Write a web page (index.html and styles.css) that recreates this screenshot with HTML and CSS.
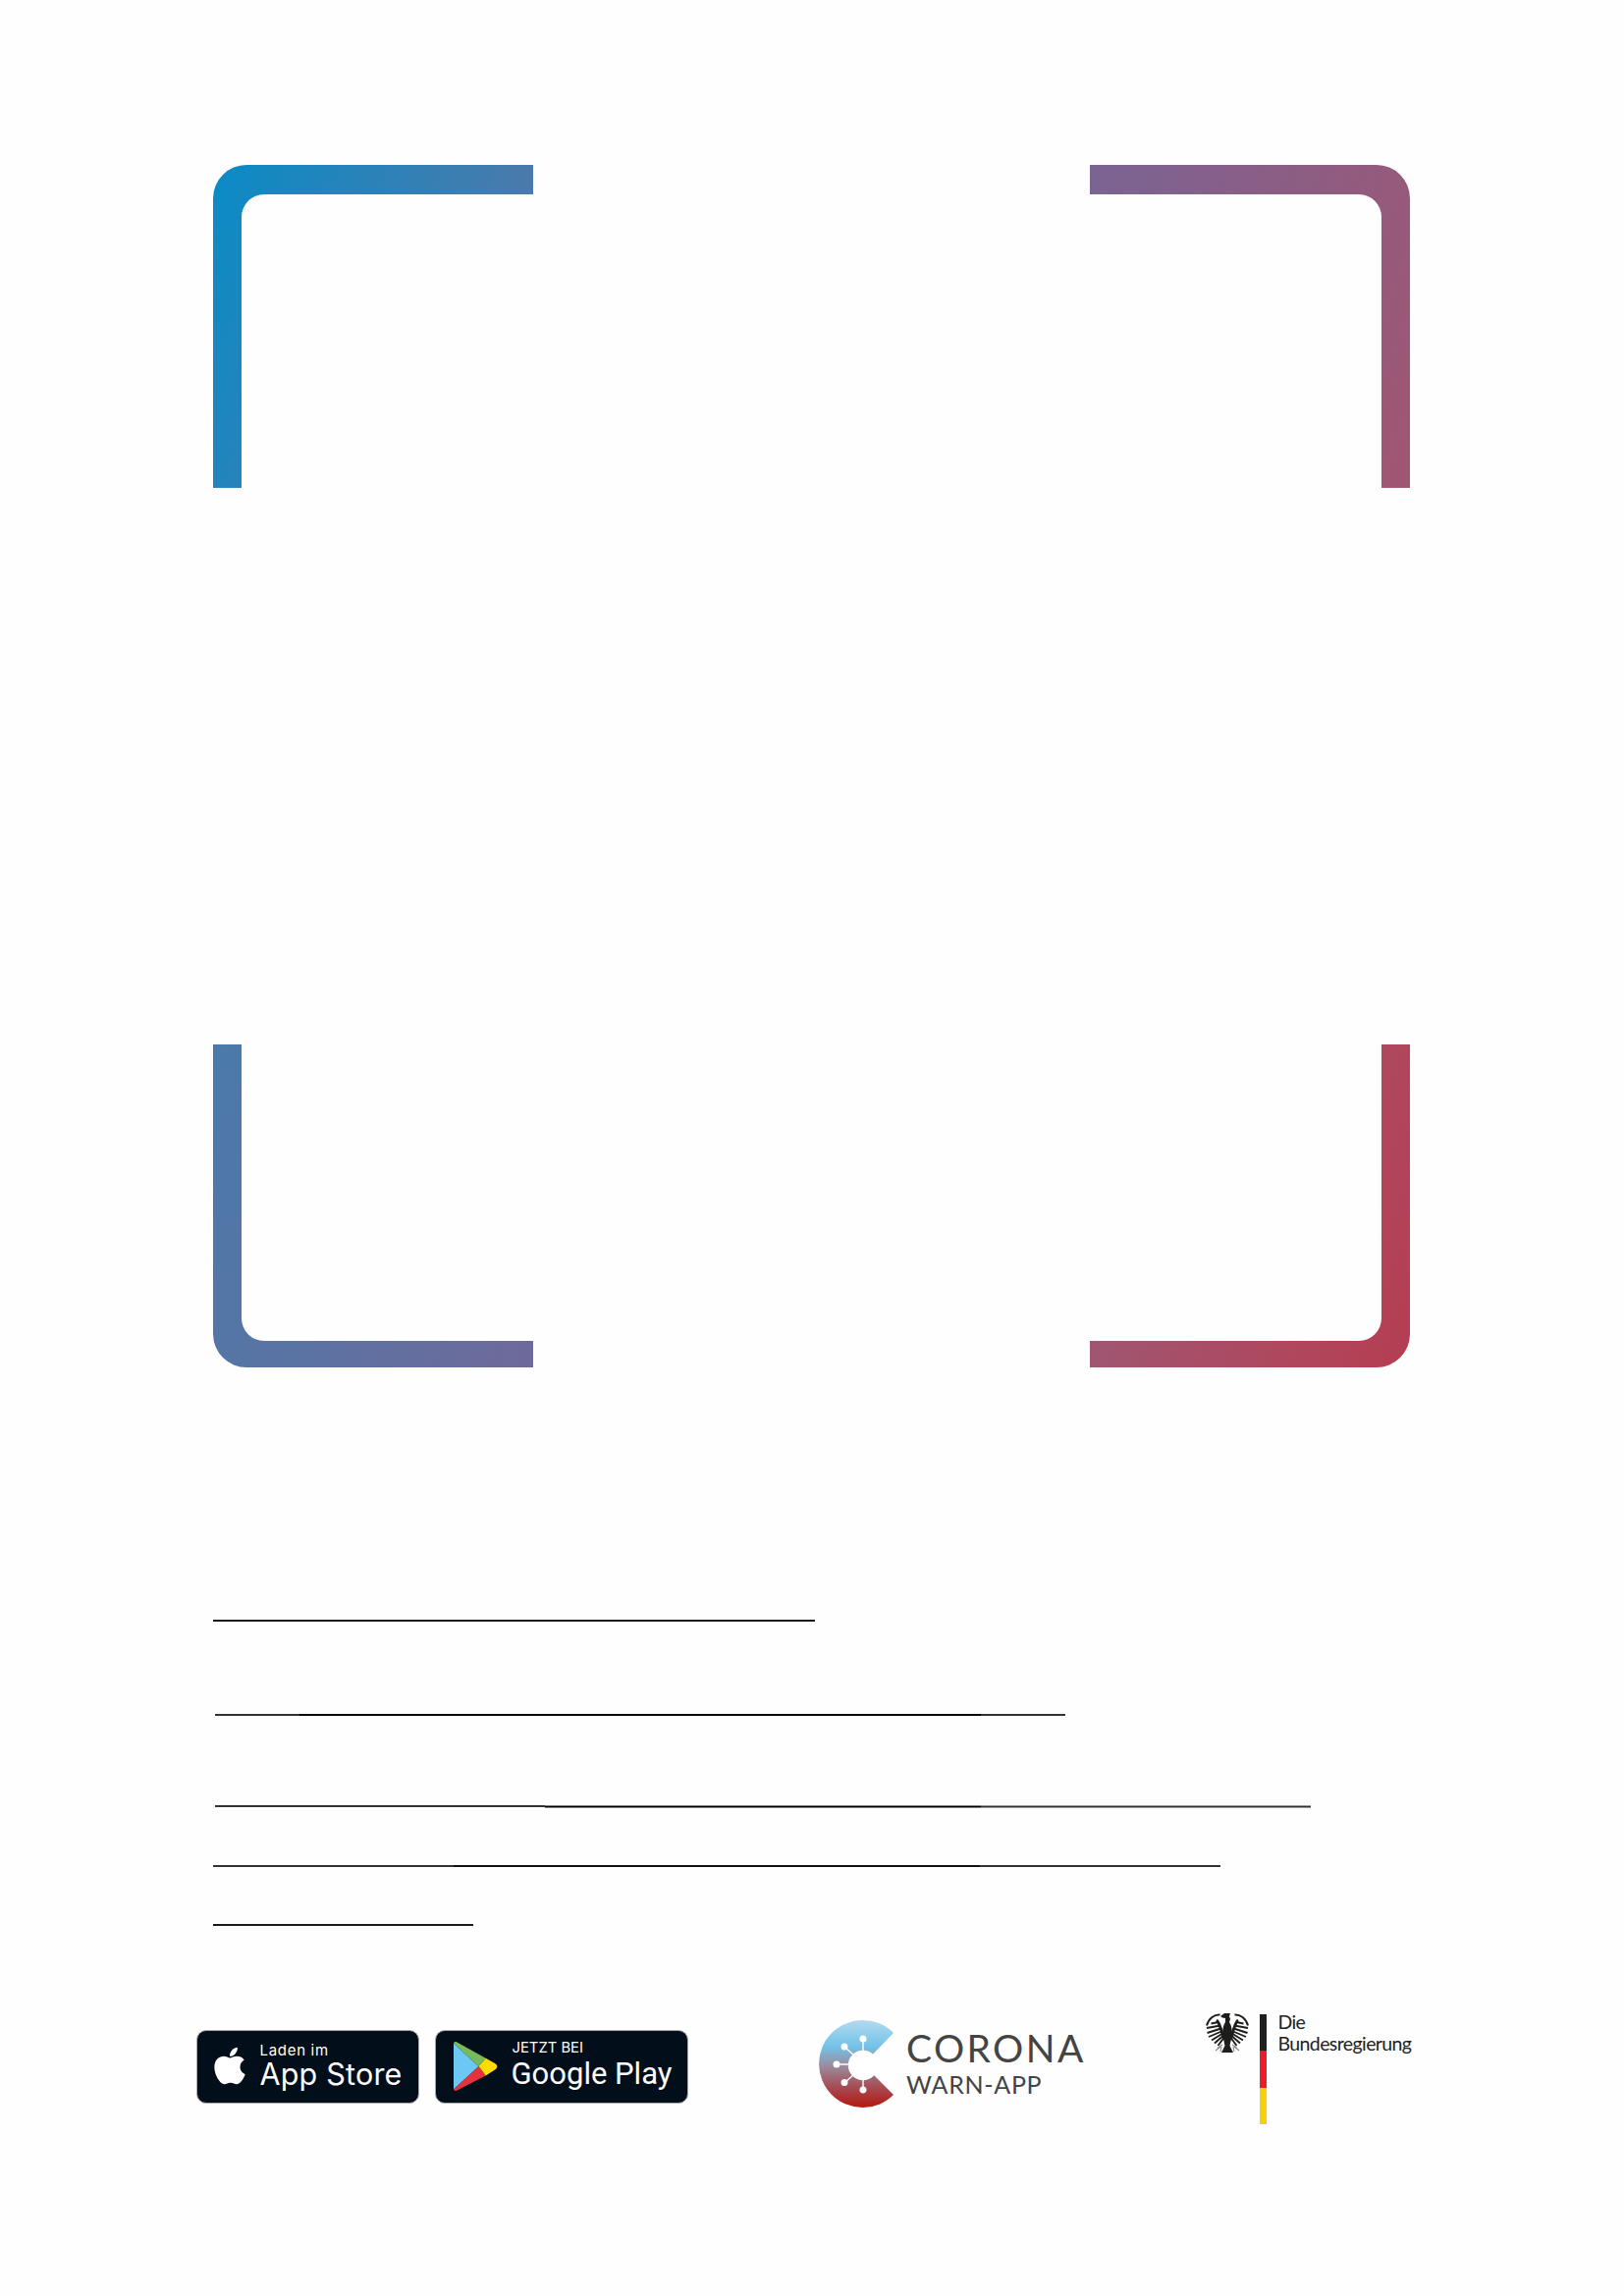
FILE: index.html
```html
<!DOCTYPE html>
<html lang="de">
<head>
<meta charset="utf-8">
<title>Corona-Warn-App</title>
<link rel="stylesheet" href="styles.css">
</head>
<body>
<main class="page">
  <svg class="frame" width="1219" height="1225" viewBox="0 0 1219 1225" aria-hidden="true">
    <defs>
      <linearGradient id="frameGrad" gradientUnits="userSpaceOnUse" x1="0" y1="0" x2="1470" y2="534.5">
        <stop offset="0" stop-color="#0a8bc6"/>
        <stop offset="0.196" stop-color="#4a7aab"/>
        <stop offset="0.46" stop-color="#6e6a9a"/>
        <stop offset="0.537" stop-color="#7a6494"/>
        <stop offset="0.8" stop-color="#a05672"/>
        <stop offset="0.93" stop-color="#b0465c"/>
        <stop offset="1" stop-color="#b53d52"/>
      </linearGradient>
    </defs>
    <g fill="url(#frameGrad)">
      <path d="M0 329V34A34 34 0 0 1 34 0H326V30H52A23 23 0 0 0 29 53V329Z"/>
      <path d="M893 0H1185A34 34 0 0 1 1219 34V329H1190V53A23 23 0 0 0 1167 30H893Z"/>
      <path d="M0 896H29V1175A23 23 0 0 0 52 1198H326V1225H34A34 34 0 0 1 0 1191Z"/>
      <path d="M1190 896H1219V1191A34 34 0 0 1 1185 1225H893V1198H1167A23 23 0 0 0 1190 1175Z"/>
    </g>
  </svg>

  <section class="rules">
    <div class="rule rule-a"></div>
    <div class="rule rule-b"><i class="seg thin seg-b1"></i><i class="seg thick seg-b2"></i><i class="seg thin seg-b3"></i></div>
    <div class="rule rule-c"><i class="seg thin seg-c1"></i><i class="seg thick low seg-c2"></i><i class="seg thin low seg-c3"></i></div>
    <div class="rule rule-d"><i class="seg thin seg-d1"></i><i class="seg mid seg-d2"></i><i class="seg thin seg-d3"></i></div>
    <div class="rule rule-e"></div>
  </section>

  <footer class="footer">
    <div class="badge badge-apple">
      <svg class="apple" width="32" height="43" viewBox="0 0 384 512" aria-hidden="true"><path fill="#fff" d="M318.7 268.7c-.2-36.7 16.4-64.4 50-84.8-18.8-26.9-47.2-41.7-84.7-44.6-35.5-2.8-74.3 20.7-88.5 20.7-15 0-49.4-19.7-76.4-19.7C63.3 141.2 4 184.8 4 273.5q0 39.3 14.4 81.2c12.8 36.7 59 126.7 107.2 125.2 25.2-.6 43-17.9 75.8-17.9 31.8 0 48.3 17.9 76.4 17.9 48.6-.7 90.4-82.5 102.6-119.3-65.2-30.7-61.7-90-61.7-91.9zm-56.6-164.2c27.3-32.4 24.8-61.9 24-72.5-24.1 1.4-52 16.4-67.9 34.9-17.5 19.8-27.8 44.3-25.5 71.9 26.1 2 49.9-11.4 69.4-34.3z"/></svg>
      <div class="badge-text">
        <span class="apple-small">Laden im</span>
        <span class="apple-big">App Store</span>
      </div>
    </div>
    <div class="badge badge-google">
      <svg class="play" width="45" height="50" viewBox="0 0 44 48" preserveAspectRatio="none" aria-hidden="true">
        <path fill="#6cc7f4" d="M0 1.5 25 24 0 46.5Z"/>
        <path fill="#78bb5c" d="M0 1.5C.4 0 1.6-.4 3 .3L32 16 25 24Z"/>
        <path fill="#e5323f" d="M0 46.5C.4 48 1.6 48.4 3 47.7L32 33 25 24Z"/>
        <path fill="#ffdb00" d="M32 16 41.5 21.4C44 23 44 25.5 41.5 27L32 33 25 24Z"/>
      </svg>
      <div class="badge-text">
        <span class="google-small">JETZT BEI</span>
        <span class="google-big">Google Play</span>
      </div>
    </div>
    <div class="cwa">
      <svg class="cwa-mark" width="90" height="90" viewBox="0 0 90 90" aria-hidden="true">
        <defs>
          <linearGradient id="cwaGrad" x1="0" y1="0" x2="0" y2="1">
            <stop offset="0" stop-color="#b4d9ef"/>
            <stop offset="0.3" stop-color="#73c3e8"/>
            <stop offset="0.52" stop-color="#9a8c9f"/>
            <stop offset="0.8" stop-color="#a8444a"/>
            <stop offset="1" stop-color="#b5170c"/>
          </linearGradient>
        </defs>
        <path fill="url(#cwaGrad)" d="M76 13A44.5 44.5 0 1 0 76 76L45 45Z"/>
        <g fill="#fff" stroke="#fff" stroke-width="1.4">
          <circle cx="45" cy="46" r="14.5"/>
          <path d="M45 19V35M26 27 36 36M18 45H31M26 64 36 55M45 71V56" fill="none"/>
          <circle cx="45" cy="19" r="2.8"/>
          <circle cx="26" cy="27" r="2.8"/>
          <circle cx="18" cy="45" r="2.8"/>
          <circle cx="26" cy="63.500" r="2.8"/>
          <circle cx="45" cy="71" r="2.8"/>
        </g>
      </svg>
      <div class="cwa-text">
        <span class="cwa-big">CORONA</span>
        <span class="cwa-small">WARN-APP</span>
      </div>
    </div>
    <div class="gov">
      <svg class="eagle" width="44" height="42" viewBox="0 0 44 42" aria-hidden="true">
        <defs>
          <g id="wing">
            <path fill="none" stroke="#1d1d1b" stroke-width="1.9" d="M14.500 2.500C9 2 3 6 1 13.500"/>
            <path fill="none" stroke="#1d1d1b" stroke-width="3" d="M11 8C14 10 16 18 18.500 27"/>
            <g fill="none" stroke="#1d1d1b" stroke-width="1.9">
              <path d="M13 10 5.500 11.500"/>
              <path d="M15 13.500 1 16"/>
              <path d="M15.500 16.500 1.500 21"/>
              <path d="M16 19.500 3 25"/>
              <path d="M16.500 22 6 28.500"/>
              <path d="M17 24.500 9 31.500"/>
              <path d="M18 26.500 12.500 34"/>
            </g>
            <path fill="none" stroke="#8a8a8a" stroke-width="1.1" d="M17 33 12 36.500M15 35 10 39M16 35 15 40"/>
          </g>
        </defs>
        <use href="#wing"/>
        <use href="#wing" transform="matrix(-1 0 0 1 44 0)"/>
        <path fill="#1d1d1b" d="M15 4 19 1H25L24 4 25 7 24 10C27 14 27 21 26 27L24.500 34 28 41H16L19.500 34 18 27C17 21 17 14 20 10L20 6 17 5.500Z"/>
      </svg>
      <div class="stripe"><i class="st-black"></i><i class="st-red"></i><i class="st-gold"></i></div>
      <p class="gov-name">Die<br>Bundesregierung</p>
    </div>
  </footer>
</main>
</body>
</html>
```

FILE: styles.css
```css
* { box-sizing: border-box; }
html, body { margin: 0; padding: 0; background: #fefefe; }
.page { width: 1654px; height: 2339px; padding-top: 168px; overflow: hidden; }

.frame { display: block; margin-left: 217px; }

.rules { margin-top: 257px; }
.rule { display: flex; height: 2px; background: #1a1a1a; }
.rule-a { margin-left: 217px; width: 613px; }
.rule-b { margin-left: 219px; width: 866px; margin-top: 94px; background: none; }
.rule-c { margin-left: 219px; width: 1116px; margin-top: 91px; background: none; }
.rule-d { margin-left: 217px; width: 1026px; margin-top: 59px; background: none; }
.rule-e { margin-left: 217px; width: 265px; margin-top: 58px; }

.seg { display: block; flex: none; }
.seg.thin { height: 2px; background: #333; }
.seg.mid { height: 2px; background: #111; }
.seg.thick { height: 2px; background: #000; }
.seg.low { transform: translateY(.5px); }
.seg-b1 { width: 86px; } .seg-b2 { width: 694px; } .seg-b3 { width: 86px; }
.seg-c1 { width: 336px; } .seg-c2 { width: 444px; } .seg-c3 { width: 336px; }
.seg-d1 { width: 245px; } .seg-d2 { width: 536px; } .seg-d3 { width: 245px; }

.footer { display: flex; align-items: flex-start; padding-left: 200px; margin-top: 106px; }
.badge {
  display: flex; flex: none; height: 75px;
  background: #020e1a;
  border: 1.5px solid #a9a9a9; border-radius: 10px;
  color: #fff; font-family: Inter, "Liberation Sans", sans-serif;
}
.badge-text { display: flex; flex-direction: column; }
.badge-text span { white-space: nowrap; display: block; }

.badge-apple { width: 227px; padding-left: 16.5px; }
.apple { margin-top: 13.5px; flex: none; }
.badge-apple .badge-text { margin-left: 15px; padding-top: 11px; }
.apple-small { font-size: 15px; line-height: 18px; letter-spacing: .7px; }
.apple-big { font-size: 30.5px; line-height: 34px; margin-top: -2.5px; letter-spacing: .2px; }

.badge-google { width: 258px; margin-left: 16px; padding-left: 17.5px; }
.play { margin-top: 10.5px; flex: none; }
.badge-google .badge-text { margin-left: 15px; padding-top: 8.7px; }
.google-small { font-size: 14.8px; line-height: 17px; }
.google-big { font-family: Roboto, sans-serif; font-size: 31px; line-height: 38px; margin: -1px 0 0 -1px; }

.cwa { display: flex; flex: none; width: 270px; margin-left: 133px; margin-top: -10px; }
.cwa-mark { display: block; flex: none; }
.cwa-text { display: flex; flex-direction: column; margin-left: -1px; color: #444; font-family: Lato, sans-serif; padding-top: 6px; }
.cwa-big { font-size: 39px; line-height: 44px; letter-spacing: 2.4px; }
.cwa-small { font-size: 25px; line-height: 30px; letter-spacing: .7px; }

.gov { display: flex; flex: none; margin-left: 124px; margin-top: -18px; }
.eagle { display: block; flex: none; }
.stripe { display: flex; flex-direction: column; flex: none; width: 7px; height: 112px; margin-left: 11px; margin-top: 2px; }
.stripe i { display: block; height: 37.5px; }
.st-black { background: #1f1f1f; }
.st-red { background: #ec1c2a; }
.st-gold { background: #f3d20c; }
.gov-name { margin: -1.5px 0 0 11.5px; font-family: Lato, sans-serif; font-size: 19.5px; line-height: 22px; color: #222; white-space: nowrap; letter-spacing: -.6px; }
```
